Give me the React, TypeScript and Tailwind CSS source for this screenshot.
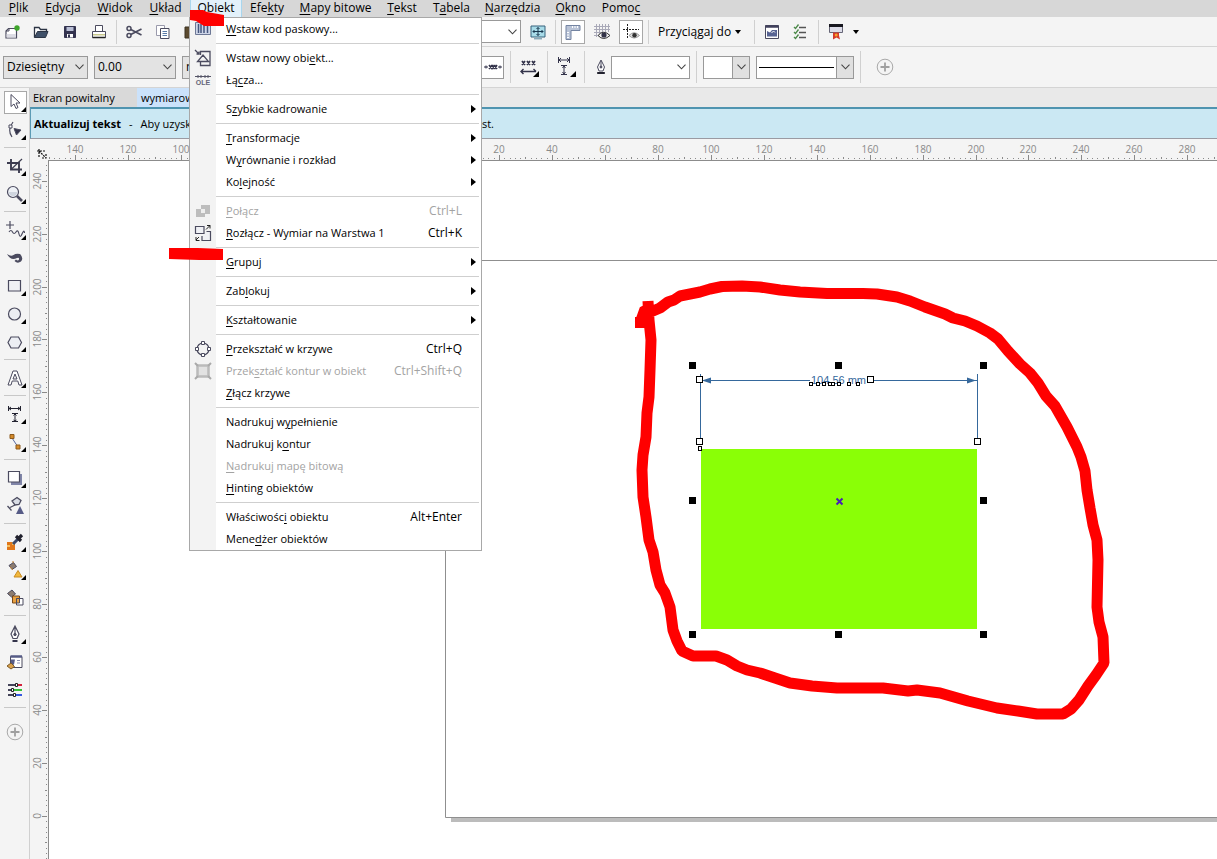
import type { ReactNode } from "react";

const INK = "#4b4b5f";

function Svg({ children, size = 18 }: { children: ReactNode; size?: number }) {
  return (
    <svg width={size} height={size} viewBox="0 0 18 18" fill="none" stroke={INK} strokeWidth="1" aria-hidden="true">
      {children}
    </svg>
  );
}

/* Renders a label whose access key is preceded by "&". */
function Label({ text }: { text: string }) {
  const at = text.indexOf("&");
  if (at < 0) return <span className="whitespace-pre">{text}</span>;
  return (
    <span className="whitespace-pre">
      {text.slice(0, at)}
      <span className="underline underline-offset-2">{text[at + 1]}</span>
      {text.slice(at + 2)}
    </span>
  );
}

const topMenus = [
  { text: "&Plik", width: "w-[37px]" },
  { text: "&Edycja", width: "w-[52px]" },
  { text: "&Widok", width: "w-[52px]" },
  { text: "&Układ", width: "w-[49px]" },
  { text: "O&biekt", width: "w-[52px]", open: true },
  { text: "Efe&kty", width: "w-[50px]" },
  { text: "&Mapy bitowe", width: "w-[87px]" },
  { text: "&Tekst", width: "w-[46px]" },
  { text: "T&abela", width: "w-[53px]" },
  { text: "&Narzędzia", width: "w-[69px]" },
  { text: "&Okno", width: "w-[47px]" },
  { text: "Pomo&c", width: "w-[54px]" },
];

function MenuBar() {
  return (
    <nav className="flex h-[17px] shrink-0 bg-[#d7d7d7]">
      {topMenus.map((m) => (
        <button
          key={m.text}
          type="button"
          className={`flex h-[17px] shrink-0 items-start justify-center ${m.width} ${
            m.open ? "border-x border-[#a9d6ee] bg-[#e3f1fa]" : ""
          }`}
        >
          <span className="leading-[15px]">
            <Label text={m.text} />
          </span>
        </button>
      ))}
    </nav>
  );
}

function Sep({ tall = false }: { tall?: boolean }) {
  return <span className={`w-px shrink-0 bg-[#d0d0d0] ${tall ? "h-8" : "h-6"}`} />;
}

function ToolButton({ label, boxed, children }: { label: string; boxed?: boolean; children: ReactNode }) {
  return (
    <button
      type="button"
      aria-label={label}
      className={`flex h-6 w-6 shrink-0 items-center justify-center ${boxed ? "border border-[#a8a8a8] bg-white" : ""}`}
    >
      {children}
    </button>
  );
}

function Chevron() {
  return (
    <svg width="9" height="6" viewBox="0 0 9 6" fill="none" stroke="#444" strokeWidth="1.1" aria-hidden="true">
      <path d="M.5.7 4.5 4.8 8.500.7" />
    </svg>
  );
}

function Combo({
  label,
  value,
  width,
  gray,
  buttonGray,
  line,
}: {
  label: string;
  value: string;
  width: string;
  gray?: boolean;
  buttonGray?: boolean;
  line?: boolean;
}) {
  return (
    <div className={`relative h-[23px] shrink-0 ${width}`}>
      <select
        aria-label={label}
        defaultValue={value}
        className={`h-full w-full appearance-none border border-[#999] pl-[3px] text-[12px] outline-none ${
          gray ? "bg-[#e3e3e3]" : "bg-white"
        }`}
      >
        <option value={value}>{value}</option>
      </select>
      {line && <span className="pointer-events-none absolute left-[3px] top-[11px] h-px w-[75px] bg-black" />}
      <span
        className={`pointer-events-none absolute inset-y-0 right-0 flex w-[18px] items-center justify-center ${
          buttonGray ? "border border-[#999] bg-[#e0e0e0]" : ""
        }`}
      >
        <Chevron />
      </span>
    </div>
  );
}

function StandardBar() {
  return (
    <div className="flex h-[30px] shrink-0 items-center gap-[5px] border-b border-[#d4d4d4] bg-[#f4f4f4]">
      <ToolButton label="Nowy">
        <Svg>
          <path d="M5.500 5.500h8v9.500h-10.500V8z" fill="#fff" strokeWidth="1.200" />
          <path d="M3 8h3V5.500" />
          <path d="M3.600 11h9.300v3.500H3.600z" fill="#dcdce4" stroke="none" />
          <circle cx="14" cy="5" r="2.700" fill="#3fa52c" stroke="none" />
        </Svg>
      </ToolButton>
      <ToolButton label="Otwórz">
        <Svg>
          <path d="M2.500 14.500v-10h4.500l1.500 2h6v2" fill="#fff" stroke="#2c3444" strokeWidth="1.300" />
          <path d="M2.500 14.500 5.500 8.500h10.500l-2.500 6z" fill="#3f5068" stroke="#2c3444" />
        </Svg>
      </ToolButton>
      <ToolButton label="Zapisz">
        <Svg>
          <path d="M3.500 3.500h11v11h-11z" fill="#33334f" stroke="#33334f" />
          <path d="M5.500 4h7v4h-7z" fill="#b9bfd6" stroke="none" />
          <path d="M6 11h6v3.500H6z" fill="#fff" stroke="none" />
          <path d="M7 11.500h2v3H7z" fill="#33334f" stroke="none" />
        </Svg>
      </ToolButton>
      <ToolButton label="Drukuj">
        <Svg>
          <path d="M5.500 9V2.500h7V9" fill="#fff" />
          <path d="M2.500 8.500h13v6h-13z" fill="#fff" />
          <path d="M3 11h12v1.500H3z" fill="#c8c88c" stroke="none" />
          <path d="M2.500 14.500h13" stroke="#222" strokeWidth="1.500" />
        </Svg>
      </ToolButton>
      <Sep />
      <ToolButton label="Wytnij">
        <Svg>
          <circle cx="4" cy="5.500" r="2" strokeWidth="1.500" />
          <circle cx="4" cy="12.500" r="2" strokeWidth="1.500" />
          <path d="M5.800 6.500 16.500 12M5.800 11.500 16.500 6" strokeWidth="1.700" />
        </Svg>
      </ToolButton>
      <ToolButton label="Kopiuj">
        <Svg>
          <path d="M2.500 2.500h8v10h-8z" fill="#fff" stroke="#9a9aac" />
          <path d="M6.500 5.500h8.500v10H6.500z" fill="#fff" />
          <path d="M8.500 8.500h4.500M8.500 10.500h4.500M8.500 12.500h4.500" stroke="#5a7ca8" />
        </Svg>
      </ToolButton>
      <ToolButton label="Wklej">
        <Svg>
          <path d="M2 4h12v11H2z" fill="#5b4a2f" stroke="#3c3322" />
        </Svg>
      </ToolButton>
      <Combo label="Powiększenie" value="" width="w-[312px]" />
      <ToolButton label="Pełny ekran">
        <Svg>
          <path d="M2 3h14v11H2z" fill="#a8dbe8" stroke="#37627c" />
          <path d="M9 4.500v8M4 8.500h10M7.500 6 9 4.500 10.500 6M7.500 11 9 12.500 10.500 11M5.500 7 4 8.500 5.500 10M12.500 7 14 8.500 12.500 10" stroke="#17354d" />
          <path d="M5 15.800h8" stroke="#5c8aa0" />
        </Svg>
      </ToolButton>
      <Sep />
      <ToolButton label="Linijki" boxed>
        <Svg>
          <path d="M2 2.500h14v5H7v9H2z" fill="#b9c3d6" stroke="#7484a2" />
          <path d="M8.500 3v2M11 3v2M13.500 3v2M3 9.500h2M3 12h2M3 14.500h2" stroke="#fff" />
        </Svg>
      </ToolButton>
      <ToolButton label="Siatka">
        <Svg>
          <path d="M3.500 1v13M6.500 1v13M9.500 1v9M12.500 1v8M15.500 1v8M1 3.500h16M1 6.500h16M1 9.500h9M1 12.500h5" stroke="#a9a9b8" />
          <path d="M5 12.500q5.500-6.500 12 0q-6.500 6-12 0z" fill="#f4f4f4" stroke="#333" />
          <circle cx="11" cy="12" r="2.600" fill="#333348" stroke="none" />
        </Svg>
      </ToolButton>
      <ToolButton label="Prowadnice" boxed>
        <Svg>
          <path d="M5.500 1v15M1 6.500h16" stroke="#222" strokeDasharray="2 1" />
          <path d="M7 12.500q5-5.500 10.500 0q-5.500 5-10.500 0z" fill="#ddd" stroke="#999" />
          <circle cx="12.500" cy="12.300" r="2.200" fill="#333" stroke="none" />
        </Svg>
      </ToolButton>
      <Sep />
      <button type="button" className="flex h-6 w-[95px] shrink-0 items-center justify-between px-1">
        Przyciągaj do
        <span className="mr-1 h-0 w-0 border-x-[3px] border-t-4 border-x-transparent border-t-black" />
      </button>
      <Sep />
      <ToolButton label="Opcje">
        <Svg>
          <path d="M2.500 2.500h13v13h-13z" fill="#fff" />
          <path d="M2.500 3.500h13" stroke="#41415c" strokeWidth="2.500" />
          <path d="M4 13.500V8l3 1.500L9 7h5v6.500z" fill="#586493" stroke="none" />
          <path d="M8.500 10l2-2 1.500 1.500" stroke="#fff" />
        </Svg>
      </ToolButton>
      <ToolButton label="Preferencje">
        <Svg>
          <path d="M7 4.500h7M7 9.500h7M7 14.500h7" stroke="#555" strokeWidth="1.300" />
          <path d="m2 4 1.500 1.500 3-4M2 9l1.500 1.500 3-4M2 14l1.500 1.500 3-4" stroke="#4c8a4a" strokeWidth="1.300" />
        </Svg>
      </ToolButton>
      <Sep />
      <ToolButton label="Program startowy">
        <Svg>
          <path d="M2.500 1.500h13v8h-13z" fill="#dcdce8" stroke="#667" />
          <path d="M2 2.500h14" stroke="#17171f" strokeWidth="3" />
          <path d="M6 9.500h6v3l1 4-3.500-2-3.500 2z" fill="#d5382a" stroke="none" />
          <circle cx="9.200" cy="12" r="1.500" fill="#f5a02a" stroke="none" />
        </Svg>
      </ToolButton>
      <span className="h-0 w-0 border-x-[3px] border-t-4 border-x-transparent border-t-black" />
    </div>
  );
}

function PlusCircle() {
  return (
    <Svg>
      <circle cx="9" cy="9" r="7.800" stroke="#a9a9a9" />
      <path d="M9 4.500v9M4.500 9h9" stroke="#a0a0a0" strokeWidth="1.800" />
    </Svg>
  );
}

function PropertyBar() {
  return (
    <div className="flex h-[41px] shrink-0 items-center gap-[6px] border-b border-[#d4d4d4] bg-[#f4f4f4] pl-[3px]">
      <Combo label="Styl wymiaru" value="Dziesiętny" width="w-[85px]" gray />
      <Combo label="Dokładność" value="0.00" width="w-[82px]" gray />
      <div className="flex shrink-0">
        <Combo label="Jednostki" value="mm" width="w-[299px]" gray />
        <button type="button" aria-label="Położenie" className="flex h-[23px] w-[23px] items-center justify-center border border-[#999] bg-white">
          <Svg>
            <path d="M0 9h4M14 9h4M2 7.500v3M16 7.500v3" stroke="#33334a" />
            <path d="m5 7 3 4M8 7l-3 4M8 7l2.500 4M10.500 7 8 11M10.500 7l2.500 4M13 7l-2.500 4" stroke="#33334a" strokeWidth="1.500" />
          </Svg>
        </button>
      </div>
      <Sep tall />
      <ToolButton label="Położenie tekstu">
        <svg width="20" height="20" viewBox="0 0 20 20" fill="none" stroke="#33334a" aria-hidden="true">
          <path d="m3 4 3 4M6 4 3 8M8 4l3 4M11 4 8 8M13 4l3 4M16 4l-3 4" strokeWidth="1.700" />
          <path d="M2 14.500h15M4.500 12 2 14.500 4.500 17M14.500 12l2.500 2.500" strokeWidth="1.400" />
          <path d="M20 14v6h-6z" fill="#000" stroke="none" />
        </svg>
      </ToolButton>
      <Sep tall />
      <ToolButton label="Linie pomocnicze">
        <svg width="20" height="20" viewBox="0 0 20 20" fill="none" stroke="#33334a" aria-hidden="true">
          <path d="M2.500 0v6M13.500 0v6M3 3h10M5 1 3 3l2 2M11 1l2 2-2 2M5 8.500h6M5 17.500h6M8 9v8M6.500 11 8 9l1.500 2M6.500 15 8 17l1.500-2" />
          <path d="M20 14v6h-6z" fill="#000" stroke="none" />
        </svg>
      </ToolButton>
      <Sep tall />
      <div className="flex shrink-0 items-center">
        <div className="flex w-5 justify-center">
          <Svg>
            <path d="M9 2 5.500 9l1.500 4h4l1.500-4zM9 3v5" fill="#fff" />
            <circle cx="9" cy="9" r="1" fill={INK} />
            <path d="M5.500 14.500h7v1h-7z" fill="#22222e" stroke="#22222e" />
          </Svg>
        </div>
        <Combo label="Szerokość konturu" value="" width="w-[79px]" />
      </div>
      <Sep tall />
      <Combo label="Strzałka" value="" width="w-[47px]" buttonGray />
      <Combo label="Styl linii" value="" width="w-[98px]" buttonGray line />
      <Sep tall />
      <div className="flex w-9 justify-center">
        <button type="button" aria-label="Dodaj">
          <PlusCircle />
        </button>
      </div>
    </div>
  );
}

type Tool = { label: string; icon: ReactNode; fly?: boolean; gap?: boolean; active?: boolean };

const tools: Tool[] = [
  {
    label: "Wskaźnik",
    fly: true,
    active: true,
    icon: <path d="M5 1.500v12l3-2.500 2 4.500 2-1-2-4.500h4z" fill="#fff" />,
  },
  {
    label: "Kształt",
    fly: true,
    icon: (
      <>
        <path d="M7 1Q1 9 6 16" strokeWidth="1.200" />
        <path d="M3 4h3v3H3z" fill="#fff" />
        <path d="m8 7.500 7 1.500-4.500 5z" fill="#33334a" />
      </>
    ),
  },
  {
    label: "Kadrowanie",
    fly: true,
    gap: true,
    icon: (
      <>
        <path d="M5 2v10.500h11M1 6h12v10" strokeWidth="1.900" stroke="#3c3c50" />
        <path d="M16 2 5 12.500" stroke="#3c3c50" strokeWidth="1.200" />
      </>
    ),
  },
  {
    label: "Powiększenie",
    fly: true,
    icon: (
      <>
        <circle cx="7" cy="7" r="5.500" fill="#eef1f6" strokeWidth="1.200" />
        <path d="M3 7h8a4 4 0 0 1-8 0z" fill="#cfd5df" stroke="none" />
        <path d="m11 11 5 5" strokeWidth="2.600" />
      </>
    ),
  },
  {
    label: "Rysunek odręczny",
    fly: true,
    gap: true,
    icon: <path d="M4 0v8M0 4h8M3 11q2-3 3.500 0t3.500 0 3 2 3 0 2.500-1" strokeWidth="1.200" />,
  },
  {
    label: "Środki artystyczne",
    icon: (
      <path d="M1 5q4 3 6.500 1T14 5q4 4 1 7.500-3.500 2.500-6.500-.5l1.500-1.500q2 2 3 0 .5-2.500-2-1.500-6 3.500-10-4z" fill="#4b4b5f" stroke="none" />
    ),
  },
  { label: "Prostokąt", fly: true, icon: <path d="M2.500 3.500h12v10.500h-12z" fill="#f0f1f5" strokeWidth="1.200" /> },
  { label: "Elipsa", fly: true, icon: <circle cx="8.500" cy="9" r="6" fill="#eceef3" strokeWidth="1.200" /> },
  {
    label: "Wielokąt",
    fly: true,
    icon: <path d="m5 4h7.500l3 5.500-3 5.500H5L2 9.500z" fill="#eceef3" strokeWidth="1.200" />,
  },
  {
    label: "Tekst",
    fly: true,
    gap: true,
    icon: <path d="M7 2h4l5 14h-3l-1.200-4H6.200L5 16H2zM9 5l-2 5h4z" fill="#fff" fillRule="evenodd" />,
  },
  {
    label: "Wymiar",
    fly: true,
    gap: true,
    icon: (
      <path
        d="M2.500 1v5M14.500 1v5M3 3.500h11M5 2 3 3.500 5 5M12 2l2 1.500L12 5M6 8.500h6M6 16.500h6M9 9v7M7.500 10.500 9 9l1.500 1.500M7.500 15 9 16l1.500-1"
        stroke="#222230"
      />
    ),
  },
  {
    label: "Łącznik",
    fly: true,
    icon: (
      <>
        <path d="m6 5 6 9" stroke="#5668a0" />
        <path d="M4 1.500h4v4H4zM10 12h4v4h-4z" fill="#d48a2a" stroke="#8c5a1e" />
      </>
    ),
  },
  {
    label: "Cień",
    fly: true,
    gap: true,
    icon: (
      <>
        <path d="M5 5h11v11H5z" fill="#8085a8" stroke="none" />
        <path d="M2.500 2.500h11v10.500h-11z" fill="#fff" strokeWidth="1.200" />
      </>
    ),
  },
  {
    label: "Przezroczystość",
    icon: (
      <>
        <path d="m6 4 5-3.500 4 3-2 4-4 .5z" fill="#d8dce4" strokeWidth="1.300" />
        <path d="M9 8 4 10.500M1.500 9l4 4.500" strokeWidth="1.300" />
        <path d="m14 9 4 8h-8z" fill="#565b86" stroke="none" />
      </>
    ),
  },
  {
    label: "Próbnik",
    fly: true,
    gap: true,
    icon: (
      <>
        <path d="M1 9h8v8H1z" fill="#e0771a" stroke="none" />
        <path d="M1 12h3v2H1zM6 9h2v3H6z" fill="#f6c060" stroke="none" />
        <path d="m7 11 5-5" stroke="#3c4868" strokeWidth="3" />
        <path d="m10 3 5 5M12.500 5.500 16 2" stroke="#22222e" strokeWidth="3.200" />
      </>
    ),
  },
  {
    label: "Wypełnienie interakcyjne",
    fly: true,
    icon: (
      <>
        <path d="m3 4.500 4.500-3 3 4-4.500 3z" fill="#8c7c70" />
        <path d="M7 2V0M4 6l3 3" stroke="#c08030" />
        <path d="m12 9.500 4 6.500H8z" fill="#f2b83c" stroke="#c98b22" />
      </>
    ),
  },
  {
    label: "Inteligentne wypełnienie",
    icon: (
      <>
        <path d="m1.500 4.500 4.500-3.500 3.500 4-4 3z" fill="#8c7c70" />
        <path d="M6.500 7h7v7h-7z" fill="#e8a040" stroke="#784818" />
        <path d="M10.500 9.500H17V16h-6.500z" fill="#fff" />
        <path d="M10.500 9.500h3V14h-3z" fill="#e8a040" />
      </>
    ),
  },
  {
    label: "Pióro konturu",
    fly: true,
    gap: true,
    icon: (
      <>
        <path d="M9 1 5 9l2 4.500h4L13 9zM9 2v6" fill="#fff" strokeWidth="1.200" />
        <circle cx="9" cy="9.500" r="1.200" fill={INK} />
        <path d="M6.500 15h5v2h-5z" fill="#33334a" stroke="none" />
      </>
    ),
  },
  {
    label: "Edycja wypełnienia",
    icon: (
      <>
        <path d="M4.500 3.500H16v11H4.500z" fill="#fff" />
        <path d="M4.500 3.500H16" stroke="#565b86" strokeWidth="2.500" />
        <path d="M5 6.500h4l-1 5-3 1z" fill="#565b86" stroke="none" />
        <path d="M11 7.500h3M11 10h3" stroke="#8a8eb0" />
        <path d="m1 13 4-3 3.500 3.500L5 16z" fill="#d9a04a" stroke="#7c5a28" />
      </>
    ),
  },
  {
    label: "Style kolorów",
    icon: (
      <>
        <path d="M2 4h8M2 9h3M2 14h5" stroke="#44445a" strokeWidth="1.800" />
        <path d="M12 4h4" stroke="#d3203a" strokeWidth="2" />
        <path d="M8 9h8" stroke="#38c038" strokeWidth="2" />
        <path d="M10 14h6" stroke="#3458e0" strokeWidth="2" />
        <path d="M9.500 2.500h2v3h-2zM5.500 7.500h2v3h-2zM7.500 12.500h2v3h-2z" fill="#fff" stroke="#222" />
      </>
    ),
  },
];

function Toolbox() {
  return (
    <aside className="flex w-[30px] shrink-0 flex-col border-r border-[#d0d0d0] bg-[#f4f4f4]">
      {tools.map((t) => (
        <div key={t.label} className="flex flex-col">
          {t.gap && <span className="mb-1 ml-1 mt-[3px] h-px w-[22px] bg-[#c8c8c8]" />}
          <button type="button" aria-label={t.label} className="flex h-7 items-center pl-1">
            <span className={`flex h-[23px] w-[23px] items-center justify-center ${t.active ? "border border-[#a8a8a8] bg-white" : ""}`}>
              <svg width="21" height="21" viewBox="-1 -1 21 21" fill="none" stroke={INK} aria-hidden="true">
                {t.icon}
                {t.fly && <path d="M20 14v5h-5z" fill="#000" stroke="none" />}
              </svg>
            </span>
          </button>
        </div>
      ))}
      <span className="mb-[10px] ml-1 mt-[3px] h-px w-[22px] bg-[#c8c8c8]" />
      <button type="button" aria-label="Dostosuj" className="flex h-7 items-center justify-center">
        <PlusCircle />
      </button>
    </aside>
  );
}

const STEP = 5.295;

function HorizontalRuler() {
  const marks = Array.from({ length: 400 }, (_, i) => i - 75);
  return (
    <svg className="block h-[21px] w-full" fontFamily="Open Sans, sans-serif" fontSize="10" fill="#8a8a8a" aria-label="Linijka pozioma">
      {marks.map((i) => {
        const x = Math.round(416 + i * STEP);
        if (x < 19) return null;
        const big = i % 10 === 0;
        return (
          <g key={i}>
            <rect x={x} y={big ? 16 : i % 5 === 0 ? 18 : 19} width="1" height={big ? 5 : i % 5 === 0 ? 2 : 1} />
            {big && (
              <text x={x} y="14" textAnchor="middle">
                {Math.abs(i * 2)}
              </text>
            )}
          </g>
        );
      })}
      <g stroke="#111" strokeWidth="1.200" strokeDasharray="2 1" fill="none">
        <path d="M9 10v8M7 12h8M9 12l7 7M16 15v4h-4" />
      </g>
    </svg>
  );
}

function VerticalRuler() {
  const marks = Array.from({ length: 140 }, (_, i) => i - 10);
  return (
    <svg className="block h-full w-[18px]" fontFamily="Open Sans, sans-serif" fontSize="10" fill="#8a8a8a" aria-label="Linijka pionowa">
      {marks.map((i) => {
        const y = Math.round(656 - i * STEP);
        if (y < 0) return null;
        const big = i % 10 === 0;
        return (
          <g key={i}>
            <rect x={big ? 12 : i % 5 === 0 ? 15 : 16} y={y} width={big ? 5 : i % 5 === 0 ? 2 : 1} height="1" />
            {big && (
              <text x="11" y={y} textAnchor="middle" transform={`rotate(-90 11 ${y})`}>
                {Math.abs(i * 2)}
              </text>
            )}
          </g>
        );
      })}
    </svg>
  );
}

const handles = [
  [692, 365],
  [838, 365],
  [983, 365],
  [692, 500],
  [983, 500],
  [692, 634],
  [838, 634],
  [983, 634],
];
const nodes = [
  [699, 379],
  [870, 379],
  [699, 441],
  [977, 441],
];
const smallNodes = [811, 818, 824, 830, 833, 839, 849, 858];

/* Drawing coordinates share the origin of the window. */
function Drawing() {
  return (
    <svg className="absolute left-0 top-0" width="1168" height="698" viewBox="49 161 1168 698" aria-label="Rysunek">
      <path d="M451 818h770v4H451z" fill="#bcbcbc" />
      <path d="M445.500 260.500h775v557h-775z" fill="#fff" stroke="#8f8f8f" />
      <path d="M701 449h276v180H701z" fill="#8aff06" />
      <g stroke="#35689c" fill="none">
        <path d="M700.500 374v70M977.500 374v67M701 380.500h109M867 380.500h110" />
        <path d="m702 380.500 9-3v6zM976 380.500l-9-3v6z" fill="#35689c" stroke="none" />
      </g>
      <text x="811" y="384" fontFamily="Liberation Sans, sans-serif" fontSize="11" fill="#35689c">
        104.56 mm
      </text>
      <g fill="#fff" stroke="#000">
        {nodes.map(([x, y]) => (
          <rect key={`${x}-${y}`} x={x - 2.5} y={y - 2.5} width="6" height="6" />
        ))}
        {smallNodes.map((x) => (
          <rect key={x} x={x - 1.5} y="382.500" width="3" height="3" />
        ))}
        <rect x="698.500" y="446.500" width="3" height="4" />
      </g>
      {handles.map(([x, y]) => (
        <rect key={`${x}-${y}`} x={x - 3} y={y - 3} width="7" height="7" />
      ))}
      <path d="m836.500 498.500 6 6M842.500 498.500l-6 6" stroke="#4a1fb4" strokeWidth="2" />
    </svg>
  );
}

function Marker() {
  return (
    <svg className="pointer-events-none absolute left-0 top-0 z-20" width="1217" height="859" fill="none" aria-hidden="true">
      <path
        d="M640 323 645 309 653 311 660 308 668 302 674 300 680 296 690 294 700 292 710 289 722 286.500 742 286 760 287 780 290 800 292 827 293.500 863 293.500 877 294 897 297 910 301 925 307 945 314 953 318 965 321 977 326 990 333 998 339 1008 351 1020 364 1030 373 1038 383 1046 396 1055 406 1067 427 1077 447 1081 457 1085 471 1087 490 1090 508 1093 525 1097 540 1098 560 1097 607 1099 622 1103 637 1104 663 1096 675 1088 686 1079 700 1071 709 1063 714 1037 714 1018 711 997 708 968 701 940 693 917 690 908 691 883 688 837 688 812 686 790 683 775 678 760 673 747 670 737 666 727 660 716 656 693 656 682 651 677 641 673 630 670 607 665 593 660 585 656 570 653 552 649 540 646 517 643 497 642 470 643 455 646 437 647 413 649 397 650 370 651 340 649 320 648 301"
        stroke="#ff0000"
        strokeWidth="11"
        strokeLinejoin="bevel"
      />
      <path d="M635 317h11v11h-11z" fill="#f00" />
      <path d="M190 10h13l4 2 17 3v11h-20l-8-5-6-1zM169 248h29l25 1v11h-24l-30-1z" fill="#f00" />
    </svg>
  );
}

type Row = { text: string; key?: string; sub?: boolean; off?: boolean; icon?: ReactNode };

const groups: Row[][] = [
  [
    {
      text: "&Wstaw kod paskowy...",
      icon: (
        <>
          <path d="M1.500 2.500h15v12h-15z" fill="#cfd6e8" stroke="#6d7896" />
          <path d="M4.500 4v9M7 4v9M10 4v9M13.500 4v9" stroke="#46567e" strokeWidth="1.500" />
        </>
      ),
    },
  ],
  [
    {
      text: "Wstaw nowy obi&ekt...",
      icon: (
        <path d="M6.500 6V2.500h9.500v14H6.500V13M3.500 12.500h11L9 6zM1 1l4 4M5 2.500V5H2.500" strokeWidth="1.300" />
      ),
    },
    {
      text: "Łą&cza...",
      icon: (
        <>
          <path d="M1 5.500h16M4 4v3M7 4v3M11 4v3M14 4v3" stroke="#555566" />
          <text x="9" y="14" textAnchor="middle" fontSize="7" fontFamily="Liberation Sans, sans-serif" fontWeight="bold" fill="#66667a" stroke="none">
            OLE
          </text>
        </>
      ),
    },
  ],
  [{ text: "S&zybkie kadrowanie", sub: true }],
  [
    { text: "&Transformacje", sub: true },
    { text: "W&yrównanie i rozkład", sub: true },
    { text: "Ko&lejność", sub: true },
  ],
  [
    {
      text: "&Połącz",
      key: "Ctrl+L",
      off: true,
      icon: (
        <>
          <path d="M7 3h9v9H7zM2 7h9v8H2z" fill="#bdbdbd" stroke="none" />
          <path d="M7 7h4v4H7z" fill="#eee" stroke="none" />
        </>
      ),
    },
    {
      text: "&Rozłącz - Wymiar na Warstwa 1",
      key: "Ctrl+K",
      icon: (
        <>
          <path d="M1.500 2.500h8.500v7H1.500zM12.500 7.500H16.500v9H8V12" fill="#f0f1f5" strokeWidth="1.200" />
          <path d="m12 5.500 4-4M13 1.500h3v3M5 13l-3 3M2 13v3.500h3.500" stroke="#222" />
        </>
      ),
    },
  ],
  [{ text: "&Grupuj", sub: true }],
  [{ text: "Zab&lokuj", sub: true }],
  [{ text: "&Kształtowanie", sub: true }],
  [
    {
      text: "&Przekształć w krzywe",
      key: "Ctrl+Q",
      icon: (
        <>
          <circle cx="9" cy="9" r="6" strokeWidth="1.200" />
          <path d="M7.500 1.500h3v3h-3zM7.500 13.500h3v3h-3zM1.500 7.500h3v3h-3zM13.500 7.500h3v3h-3z" fill="#fff" />
        </>
      ),
    },
    {
      text: "Przek&ształć kontur w obiekt",
      key: "Ctrl+Shift+Q",
      off: true,
      icon: (
        <>
          <path d="M3.500 3.500h11v11h-11z" fill="#e2e2e2" stroke="#bbb" strokeWidth="2.500" />
          <path d="m1 1 3 3M17 1l-3 3M1 17l3-3M17 17l-3-3" stroke="#aaa" strokeWidth="2" />
        </>
      ),
    },
    { text: "&Złącz krzywe" },
  ],
  [
    { text: "Nadrukuj w&ypełnienie" },
    { text: "Nadrukuj k&ontur" },
    { text: "&Nadrukuj mapę bitową", off: true },
    { text: "&Hinting obiektów" },
  ],
  [{ text: "Właściwośc&i obiektu", key: "Alt+Enter" }, { text: "Mene&dżer obiektów" }],
];

function ObjectMenu() {
  return (
    <div role="menu" className="absolute left-[189px] top-[17px] z-10 w-[293px] border border-[#a8a8a8] bg-[linear-gradient(to_right,#f3f3f3_26px,#fff_26px)]">
      {groups.map((rows, g) => (
        <div key={g}>
          {g > 0 && <div className="my-[3px] ml-[26px] mr-[2px] h-px bg-[#cfcfcf]" />}
          {rows.map((r) => (
            <button
              key={r.text}
              type="button"
              role="menuitem"
              disabled={r.off}
              className={`flex h-[22px] w-full items-center text-left ${r.off ? "text-[#a3a3a3]" : "text-black"}`}
            >
              <span className="flex w-9 shrink-0 pl-1">{r.icon && <Svg>{r.icon}</Svg>}</span>
              <span className="grow text-[11px]">
                <Label text={r.text} />
              </span>
              {r.key && <span className="mr-[19px] whitespace-nowrap">{r.key}</span>}
              {r.sub && <span className="mr-[5px] h-0 w-0 border-y-4 border-l-[5px] border-y-transparent border-l-black" />}
            </button>
          ))}
        </div>
      ))}
    </div>
  );
}

export default function App() {
  return (
    <div className="relative flex h-screen flex-col overflow-hidden bg-white font-['Open_Sans','Noto_Sans',sans-serif] text-[12px] leading-4 text-black">
      <MenuBar />
      <StandardBar />
      <PropertyBar />
      <div className="flex min-h-0 grow">
        <Toolbox />
        <main className="flex min-w-0 grow flex-col">
          <div className="flex h-[19px] shrink-0 bg-[#e9e9e9] text-[11px]">
            <button type="button" className="w-[107px] bg-[#d9d9d9] pl-[3px] text-left">
              Ekran powitalny
            </button>
            <button type="button" className="w-[120px] whitespace-nowrap bg-[#cbe2fb] pl-1 text-left">
              wymiarowanie
            </button>
          </div>
          <div className="flex h-8 shrink-0 items-center border-b border-l border-t-2 border-b-[#9a9aa2] border-l-[#5b9bb5] border-t-[#4f94b0] bg-[#cbe8f3] pl-[3px] text-[11px]">
            <p className="flex w-[460px] justify-between whitespace-nowrap">
              <span className="flex gap-2">
                <strong>Aktualizuj tekst</strong>
                <span>-</span>
                <span>Aby uzyskać dostęp</span>
              </span>
              <span>tekst.</span>
            </p>
          </div>
          <div className="shrink-0 bg-[#f4f4f4]">
            <HorizontalRuler />
          </div>
          <div className="flex min-h-0 grow bg-[#f4f4f4]">
            <div className="w-[18px] shrink-0 overflow-hidden">
              <VerticalRuler />
            </div>
            <div className="relative grow overflow-hidden border-l border-t border-[#8c8c8c] bg-white">
              <Drawing />
            </div>
          </div>
        </main>
      </div>
      <ObjectMenu />
      <Marker />
    </div>
  );
}
